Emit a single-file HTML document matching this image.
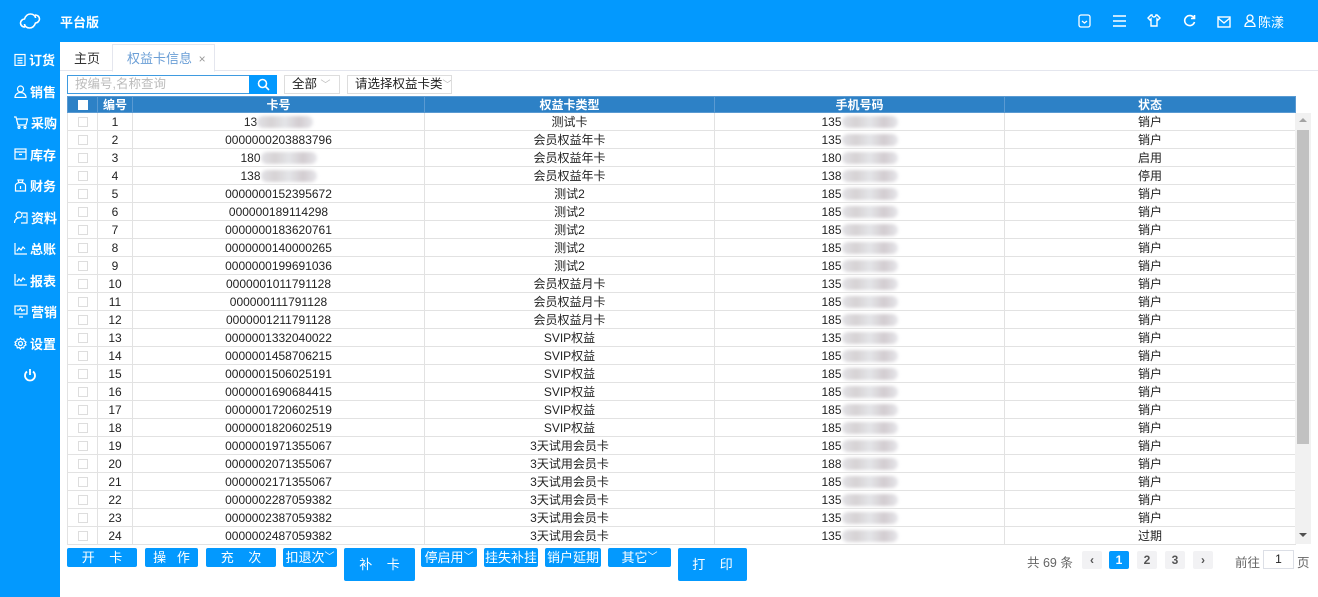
<!DOCTYPE html>
<html><head><meta charset="utf-8"><style>
*{margin:0;padding:0;box-sizing:border-box}
body{width:1318px;height:597px;overflow:hidden;background:#fff;font-family:"Liberation Sans","Noto Sans CJK SC",sans-serif;font-size:12px;color:#222;position:relative}
.top{position:absolute;left:0;top:0;width:1318px;height:42px;background:#0399fe;color:#fff}
.side{position:absolute;left:0;top:42px;width:60px;height:555px;background:#0399fe;color:#fff}
.side div{height:31.5px;display:flex;align-items:center;padding-left:14px;font-size:13px;font-weight:bold}
.side svg{margin-right:3px}
.abs{position:absolute}
.tabs{position:absolute;left:60px;top:42px;width:1258px;height:29px;border-bottom:1px solid #e4e6ee}
table{border-collapse:collapse;table-layout:fixed;position:absolute;left:67px;top:96px}
td,th{border:1px solid #e2e2e2;text-align:center;font-size:12px;font-weight:normal;white-space:nowrap;overflow:hidden;padding:0}
td{height:18px;line-height:16px}
th{background:#2d81c6;color:#fff;border-color:#5a9ad2;height:16px;line-height:14px;font-weight:bold}
.cb{display:inline-block;width:10px;height:10px;border:1px solid #ddd;background:#fff;vertical-align:middle}
.bl{display:inline-block;width:56px;height:12px;vertical-align:middle;background:linear-gradient(90deg,#e2e2e6,#d6d2d4,#e4e5e8,#d2ccd0,#e6e6ea);filter:blur(1.5px);border-radius:6px}
.btn{position:absolute;top:548px;height:19px;background:#0399fe;color:#fff;font-size:13px;border-radius:2px;display:flex;align-items:center;justify-content:center;white-space:pre;line-height:19px}
.pg{position:absolute;top:551px;height:18px;width:20px;background:#f2f2f4;color:#555;font-weight:bold;font-size:12px;display:flex;align-items:center;justify-content:center;border-radius:2px}
.inp{position:absolute;top:75px;height:19px;line-height:17px;font-size:12.5px;white-space:nowrap;overflow:hidden}
</style></head><body>
<div class="top">
<svg class="abs" style="left:19px;top:12px" width="22" height="18" viewBox="0 0 22 18" fill="none" stroke="#fff" stroke-width="1.6"><path d="M6 15c-3 0-4.5-2-4.5-4s2-4 4-4c1-3 3-5 6-5 3 0 5 2 5 4M16 3c3 0 4.5 2 4.5 4s-2 4-4 4c-1 3-3 5-6 5-3 0-5-2-5-4"/></svg>
<div class="abs" style="left:60px;top:12px;font-size:13px;font-weight:bold">平台版</div>
<svg class="abs" style="left:1078px;top:14px" width="13" height="14" viewBox="0 0 13 14" fill="none" stroke="#fff" stroke-width="1.3"><rect x="1" y="1" width="11" height="12" rx="2"/><path d="M4 7l2.5 2L9 7"/></svg>
<svg class="abs" style="left:1113px;top:15px" width="13" height="12" viewBox="0 0 13 12" stroke="#fff" stroke-width="1.5"><path d="M0 1h13M0 6h13M0 11h13"/></svg>
<svg class="abs" style="left:1147px;top:14px" width="14" height="13" viewBox="0 0 14 13" fill="none" stroke="#fff" stroke-width="1.4"><path d="M4 1L1 4l2 2 1-1v7h6V5l1 1 2-2-3-3H9a2 2 0 0 1-4 0z"/></svg>
<svg class="abs" style="left:1183px;top:14px" width="13" height="13" viewBox="0 0 13 13" fill="none" stroke="#fff" stroke-width="1.6"><path d="M11 4A5 5 0 1 0 11.5 8M11.5 1v3.5H8"/></svg>
<svg class="abs" style="left:1217px;top:16px" width="14" height="12" viewBox="0 0 14 12" fill="none" stroke="#fff" stroke-width="1.4"><rect x="1" y="1" width="12" height="10"/><path d="M1 2l6 5 6-5"/></svg>
<svg class="abs" style="left:1244px;top:14px" width="12" height="13" viewBox="0 0 12 13" fill="none" stroke="#fff" stroke-width="1.3"><circle cx="6" cy="4" r="3"/><path d="M1 12.5c0-3 2.5-5 5-5s5 2 5 5z"/></svg>
<div class="abs" style="left:1258px;top:12px;font-size:13px">陈漾</div>
</div>
<div class="side">
<div style="margin-top:2px"><svg width="12" height="13" viewBox="0 0 12 13" fill="none" stroke="#fff" stroke-width="1.2"><rect x="1" y="1.5" width="10" height="11"/><path d="M3.5 5h5M3.5 7.5h5M3.5 10h5"/></svg>订货</div>
<div><svg width="13" height="13" viewBox="0 0 13 13" fill="none" stroke="#fff" stroke-width="1.2"><circle cx="6.5" cy="4" r="3"/><path d="M1 12.5c0-3 2.5-5 5.5-5s5.5 2 5.5 5z"/></svg>销售</div>
<div><svg width="14" height="13" viewBox="0 0 14 13" fill="none" stroke="#fff" stroke-width="1.2"><path d="M0 1h2l2 8h8l1.5-6H3"/><circle cx="5" cy="11.5" r="1"/><circle cx="11" cy="11.5" r="1"/></svg>采购</div>
<div><svg width="13" height="12" viewBox="0 0 13 12" fill="none" stroke="#fff" stroke-width="1.2"><rect x="1" y="1" width="11" height="10"/><path d="M1 4h11M5 6.5h3"/></svg>库存</div>
<div><svg width="13" height="13" viewBox="0 0 13 13" fill="none" stroke="#fff" stroke-width="1.2"><path d="M4 1h5l-1 2.5h-3zM1.5 6c1-2 3-2.5 5-2.5s4 .5 5 2.5v6h-10z"/><path d="M6.5 7v3"/></svg>财务</div>
<div><svg width="14" height="13" viewBox="0 0 14 13" fill="none" stroke="#fff" stroke-width="1.2"><circle cx="5" cy="4" r="3"/><path d="M0.5 12c0-3 2-5 4.5-5M8 2h5v10H7M9 6h3"/></svg>资料</div>
<div><svg width="13" height="12" viewBox="0 0 13 12" fill="none" stroke="#fff" stroke-width="1.2"><path d="M1 0v11h12M3 8l2-3 2 2 2-3 2 2"/></svg>总账</div>
<div><svg width="13" height="12" viewBox="0 0 13 12" fill="none" stroke="#fff" stroke-width="1.2"><path d="M1 0v11h12M3 8l2-3 2 2 2-3 2 2"/></svg>报表</div>
<div><svg width="14" height="13" viewBox="0 0 14 13" fill="none" stroke="#fff" stroke-width="1.2"><rect x="1" y="1" width="12" height="8"/><path d="M3 5h2l1.5-2 1.5 3 1-1h2M5 12h4"/></svg>营销</div>
<div><svg width="13" height="13" viewBox="0 0 13 13" fill="none" stroke="#fff" stroke-width="1.2"><circle cx="6.5" cy="6.5" r="2"/><path d="M6.5 1l1.2 1.6 2-.5.5 2 1.8 1-.9 1.4.9 1.4-1.8 1-.5 2-2-.5-1.2 1.6-1.2-1.6-2 .5-.5-2-1.8-1 .9-1.4-.9-1.4 1.8-1 .5-2 2 .5z"/></svg>设置</div>
<div style="padding-left:23px"><svg width="14" height="14" viewBox="0 0 14 14" fill="none" stroke="#fff" stroke-width="1.8"><path d="M4 3.5a5 5 0 1 0 6 0M7 1v6"/></svg></div>
</div>
<div class="tabs">
<div class="abs" style="left:52px;top:2px;width:103px;height:28px;border:1px solid #e4e6ee;border-bottom:1px solid #fff;background:#fff"></div>
<div class="abs" style="left:14px;top:6px;font-size:13px;color:#333">主页</div>
<div class="abs" style="left:67px;top:6px;font-size:13px;color:#6a9ed6">权益卡信息 <span style="color:#999;margin-left:3px;font-size:12px">×</span></div>
</div>
<div class="inp" style="left:67px;width:183px;border:1px solid #3f9be0;color:#bbb;padding:0 7px">按编号,名称查询</div>
<div class="abs" style="left:249px;top:75px;width:28px;height:19px;background:#0399fe"><svg style="margin:3px 0 0 8px" width="13" height="13" viewBox="0 0 13 13" fill="none" stroke="#fff" stroke-width="1.6"><circle cx="5.5" cy="5.5" r="4"/><path d="M8.5 8.5l3.5 3.5"/></svg></div>
<div class="inp" style="left:284px;width:56px;border:1px solid #ddd;padding:0 7px">全部 <span style="color:#bbb;font-size:10px">﹀</span></div>
<div class="inp" style="left:347px;width:105px;border:1px solid #ddd;padding:0 7px">请选择权益卡类<span style="color:#bbb;font-size:10px">﹀</span></div>
<table id="t">
<colgroup><col style="width:30px"><col style="width:35px"><col style="width:292px"><col style="width:290px"><col style="width:290px"><col style="width:291px"></colgroup>
<tr><th><span class="cb" style="border:none"></span></th><th>编号</th><th>卡号</th><th>权益卡类型</th><th>手机号码</th><th>状态</th></tr>
</table>
<div class="abs" style="left:1295px;top:113px;width:16px;height:431px;background:#f1f1f1"></div>
<div class="abs" style="left:1297px;top:130px;width:12px;height:314px;background:#c1c1c1"></div>
<div class="abs" style="left:1299px;top:118px;width:0;height:0;border:4px solid transparent;border-bottom:4px solid #a3a3a3;border-top:0"></div>
<div class="abs" style="left:1299px;top:533px;width:0;height:0;border:4px solid transparent;border-top:4px solid #505050;border-bottom:0"></div>
<div class="btn" style="left:67px;width:70px">开    卡</div>
<div class="btn" style="left:145px;width:53px">操   作</div>
<div class="btn" style="left:206px;width:70px">充    次</div>
<div class="btn" style="left:283px;width:54px">扣退次<span style="font-size:10px">﹀</span></div>
<div class="btn" style="left:344px;width:71px;height:33px">补    卡</div>
<div class="btn" style="left:421px;width:56px">停启用<span style="font-size:10px">﹀</span></div>
<div class="btn" style="left:484px;width:54px">挂失补挂</div>
<div class="btn" style="left:545px;width:56px">销户延期</div>
<div class="btn" style="left:608px;width:63px">其它<span style="font-size:10px">﹀</span></div>
<div class="btn" style="left:678px;width:69px;height:33px">打    印</div>
<div class="abs" style="left:1027px;top:552px;color:#666;font-size:12.5px">共 69 条</div>
<div class="pg" style="left:1082px">&lsaquo;</div>
<div class="pg" style="left:1109px;background:#0399fe;color:#fff">1</div>
<div class="pg" style="left:1137px">2</div>
<div class="pg" style="left:1165px">3</div>
<div class="pg" style="left:1193px">&rsaquo;</div>
<div class="abs" style="left:1235px;top:552px;color:#666;font-size:12.5px">前往</div>
<div class="abs" style="left:1263px;top:550px;width:31px;height:19px;border:1px solid #dcdfe6;text-align:center;font-size:12px;line-height:17px">1</div>
<div class="abs" style="left:1297px;top:552px;color:#666;font-size:12.5px">页</div>
<script>
var d=[["1","13*","测试卡","135","销户"],["2","0000000203883796","会员权益年卡","135","销户"],["3","180*","会员权益年卡","180","启用"],["4","138*","会员权益年卡","138","停用"],
["5","0000000152395672","测试2","185","销户"],["6","000000189114298","测试2","185","销户"],["7","0000000183620761","测试2","185","销户"],["8","0000000140000265","测试2","185","销户"],["9","0000000199691036","测试2","185","销户"],
["10","0000001011791128","会员权益月卡","135","销户"],["11","000000111791128","会员权益月卡","185","销户"],["12","0000001211791128","会员权益月卡","185","销户"],
["13","0000001332040022","SVIP权益","135","销户"],["14","0000001458706215","SVIP权益","185","销户"],["15","0000001506025191","SVIP权益","185","销户"],["16","0000001690684415","SVIP权益","185","销户"],["17","0000001720602519","SVIP权益","185","销户"],["18","0000001820602519","SVIP权益","185","销户"],
["19","0000001971355067","3天试用会员卡","185","销户"],["20","0000002071355067","3天试用会员卡","188","销户"],["21","0000002171355067","3天试用会员卡","185","销户"],["22","0000002287059382","3天试用会员卡","135","销户"],["23","0000002387059382","3天试用会员卡","135","销户"],["24","0000002487059382","3天试用会员卡","135","过期"]];
var h="";d.forEach(function(r){var c=r[1].indexOf("*")>0?r[1].replace("*","")+'<span class="bl"></span>':r[1];
h+='<tr><td><span class="cb"></span></td><td>'+r[0]+'</td><td>'+c+'</td><td>'+r[2]+'</td><td>'+r[3]+'<span class="bl"></span></td><td>'+r[4]+'</td></tr>';});
document.getElementById("t").insertAdjacentHTML("beforeend",h);
</script>
</body></html>
